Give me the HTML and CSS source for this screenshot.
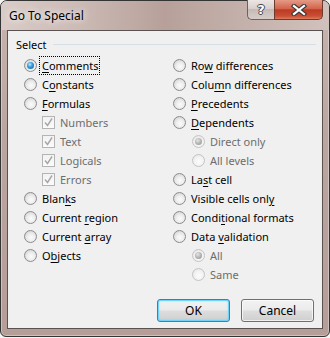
FILE: index.html
```html
<!DOCTYPE html>
<html lang="en">
<head>
  <meta charset="UTF-8" />
  <title>Go To Special</title>
  <link rel="stylesheet" href="styles.css">
</head>
<body>

<div class="window">
  <div class="titlebar">
    <span class="title">Go To Special</span>
    <div class="caption">
      <div class="cap-help">?</div>
      <div class="cap-close">
        <svg width="16" height="12" viewBox="0 0 16 12">
          <path d="M3 2 L13 10 M13 2 L3 10" stroke="#3b3b3b" stroke-width="4.4" stroke-linecap="square" fill="none"/>
          <path d="M3 2 L13 10 M13 2 L3 10" stroke="#fff" stroke-width="2.2" stroke-linecap="square" fill="none"/>
        </svg>
      </div>
    </div>
  </div>

  <div class="client">
    <div class="legend">
      <span>Select</span>
      <div class="legend-line"></div>
    </div>

    <div class="cols">
      <div class="col">
        <div class="row"><span class="radio checked"></span><span class="focus"><u>C</u>omments</span></div>
        <div class="row"><span class="radio"></span><span>C<u>o</u>nstants</span></div>
        <div class="row"><span class="radio"></span><span><u>F</u>ormulas</span></div>
        <div class="row sub off"><span class="check"><svg width="11" height="11" viewBox="0 0 11 11"><path d="M2 5.5 L4.5 8.5 L9 1.5" stroke="#a6a6a6" stroke-width="1.4" fill="none"/></svg></span><span>Numbers</span></div>
        <div class="row sub off"><span class="check"><svg width="11" height="11" viewBox="0 0 11 11"><path d="M2 5.5 L4.5 8.5 L9 1.5" stroke="#a6a6a6" stroke-width="1.4" fill="none"/></svg></span><span>Text</span></div>
        <div class="row sub off"><span class="check"><svg width="11" height="11" viewBox="0 0 11 11"><path d="M2 5.5 L4.5 8.5 L9 1.5" stroke="#a6a6a6" stroke-width="1.4" fill="none"/></svg></span><span>Logicals</span></div>
        <div class="row sub off"><span class="check"><svg width="11" height="11" viewBox="0 0 11 11"><path d="M2 5.5 L4.5 8.5 L9 1.5" stroke="#a6a6a6" stroke-width="1.4" fill="none"/></svg></span><span>Errors</span></div>
        <div class="row"><span class="radio"></span><span>Blan<u>k</u>s</span></div>
        <div class="row"><span class="radio"></span><span>Current <u>r</u>egion</span></div>
        <div class="row"><span class="radio"></span><span>Current <u>a</u>rray</span></div>
        <div class="row"><span class="radio"></span><span>O<u>b</u>jects</span></div>
      </div>
      <div class="col">
        <div class="row"><span class="radio"></span><span>Ro<u>w</u> differences</span></div>
        <div class="row"><span class="radio"></span><span>Colu<u>m</u>n differences</span></div>
        <div class="row"><span class="radio"></span><span><u>P</u>recedents</span></div>
        <div class="row"><span class="radio"></span><span><u>D</u>ependents</span></div>
        <div class="row sub-r off"><span class="radio checked"></span><span>Direct only</span></div>
        <div class="row sub-r off"><span class="radio"></span><span>All levels</span></div>
        <div class="row"><span class="radio"></span><span>La<u>s</u>t cell</span></div>
        <div class="row"><span class="radio"></span><span>Visible cells onl<u>y</u></span></div>
        <div class="row"><span class="radio"></span><span>Condi<u>t</u>ional formats</span></div>
        <div class="row"><span class="radio"></span><span>Data <u>v</u>alidation</span></div>
        <div class="row sub-r off"><span class="radio checked"></span><span>All</span></div>
        <div class="row sub-r off"><span class="radio"></span><span>Same</span></div>
      </div>
    </div>

    <div class="actions">
      <button class="btn default">OK</button>
      <button class="btn">Cancel</button>
    </div>
  </div>
</div>

</body>
</html>
```

FILE: styles.css
```css
body {
  margin: 0;
  background: #f3f3f3;
  font-family: 'Noto Sans', 'Open Sans', sans-serif;
  font-size: 11px;
  color: #000;
}
.window {
  width: 330px;
  height: 337px;
  box-sizing: border-box;
  border: 1px solid #343434;
  border-radius: 7px 7px 6px 6px;
  padding: 0 6px 7px;
  background: linear-gradient(180deg, #c8b5b0 0%, #bba5a0 40%, #b59e98 100%);
  box-shadow: inset 0 0 0 1px rgba(255, 255, 255, 0.35);
  display: flex;
  flex-direction: column;
}

/* Barra de título */
.titlebar {
  height: 29px;
  display: flex;
  align-items: flex-start;
  margin: 0 -6px;
  padding: 0 6px 0 8px;
  border-radius: 6px 6px 0 0;
  background: linear-gradient(90deg, #d9ccc8 0%, #cbb9b4 25%, #b7a09a 50%, #c2aea8 70%, #d1c1bc 100%);
}
.title {
  font-size: 12px;
  line-height: 29px;
  color: #000;
  text-shadow: 0 0 6px rgba(255, 255, 255, 0.9), 0 0 10px rgba(255, 255, 255, 0.6);
}
.caption {
  margin-left: auto;
  margin-top: -1px;
  display: flex;
  height: 21px;
}
.cap-help {
  width: 27px;
  height: 20px;
  box-sizing: border-box;
  border: 1px solid #6e605c;
  border-top: none;
  border-right: none;
  border-radius: 0 0 0 5px;
  background: linear-gradient(180deg, #ece6e4 0%, #d9d0cd 45%, #c6bab6 50%, #d6cdca 100%);
  color: #fff;
  font-family: 'DejaVu Sans', sans-serif;
  font-weight: bold;
  font-size: 13px;
  line-height: 19px;
  text-align: center;
  text-shadow: -1px 0 #444, 1px 0 #444, 0 -1px #444, 0 1px #444;
}
.cap-close {
  width: 49px;
  height: 20px;
  box-sizing: border-box;
  border: 1px solid #6e3a30;
  border-top: none;
  border-radius: 0 0 5px 0;
  background: linear-gradient(180deg, #e59a86 0%, #d3654c 45%, #bd3a22 52%, #c94f34 85%, #dc7c60 100%);
  display: flex;
  align-items: center;
  justify-content: center;
}

/* Área do cliente */
.client {
  flex: 1;
  border: 1px solid #5a5250;
  background: #f0f0f0;
  display: flex;
  flex-direction: column;
}
.legend {
  display: flex;
  align-items: center;
  margin-top: 6px;
  padding-left: 8px;
  height: 14px;
}
.legend-line {
  flex: 1;
  height: 1px;
  background: #d5dfe5;
  margin: 0 6px 0 6px;
}
.cols {
  display: grid;
  grid-template-columns: 149px 1fr;
  margin-top: 5px;
  padding-left: 16px;
}
.row {
  height: 19px;
  display: flex;
  align-items: center;
  gap: 5px;
  white-space: nowrap;
}
.row.sub {
  padding-left: 18px;
}
.row.sub-r {
  padding-left: 19px;
}
.row.off {
  color: #6d6d6d;
}
u {
  text-decoration-thickness: 1px;
  text-underline-offset: 2px;
}
.focus {
  outline: 1px dotted #000;
  outline-offset: 1px;
  margin-left: -1px;
  padding-left: 1px;
}

/* Botões de opção */
.radio {
  width: 13px;
  height: 13px;
  box-sizing: border-box;
  border-radius: 50%;
  border: 1px solid #8c8c8c;
  background: radial-gradient(circle at 55% 60%, #fbfbfb 0%, #eeeeee 40%, #d2d2d2 85%);
  display: flex;
  align-items: center;
  justify-content: center;
  flex: none;
}
.radio.checked::after {
  content: "";
  width: 7px;
  height: 7px;
  border-radius: 50%;
  background: radial-gradient(circle at 40% 35%, #b9ecff 0%, #3a9ee0 40%, #14538c 100%);
}
.off .radio {
  border-color: #c4c4c4;
  background: radial-gradient(circle at 55% 60%, #fcfcfc 0%, #f2f2f2 50%, #e2e2e2 90%);
}
.off .radio.checked::after {
  background: radial-gradient(circle at 40% 35%, #e6e6e6 0%, #b4b4b4 50%, #8f8f8f 100%);
}

/* Caixas de seleção */
.check {
  width: 13px;
  height: 13px;
  box-sizing: border-box;
  border: 1px solid #b4b4b4;
  background: linear-gradient(180deg, #f2f2f2, #fbfbfb);
  display: flex;
  align-items: center;
  justify-content: center;
  flex: none;
}
.check svg {
  display: block;
}

/* Botões OK / Cancelar */
.actions {
  margin-top: auto;
  display: flex;
  justify-content: flex-end;
  gap: 11px;
  padding: 0 8px 6px 0;
}
.btn {
  width: 73px;
  height: 23px;
  box-sizing: border-box;
  border: 1px solid #707070;
  border-radius: 3px;
  background: linear-gradient(180deg, #f2f2f2 0%, #ebebeb 48%, #dddddd 52%, #cfcfcf 100%);
  box-shadow: inset 0 0 0 1px rgba(255, 255, 255, 0.7);
  font-family: 'Noto Sans', 'Open Sans', sans-serif;
  font-size: 12px;
  color: #000;
  padding: 0;
}
.btn.default {
  border-color: #3c7fb1;
  box-shadow: inset 0 0 0 1px #6fd3fa, inset 0 0 2px 1px rgba(72, 216, 251, 0.6);
}
```
